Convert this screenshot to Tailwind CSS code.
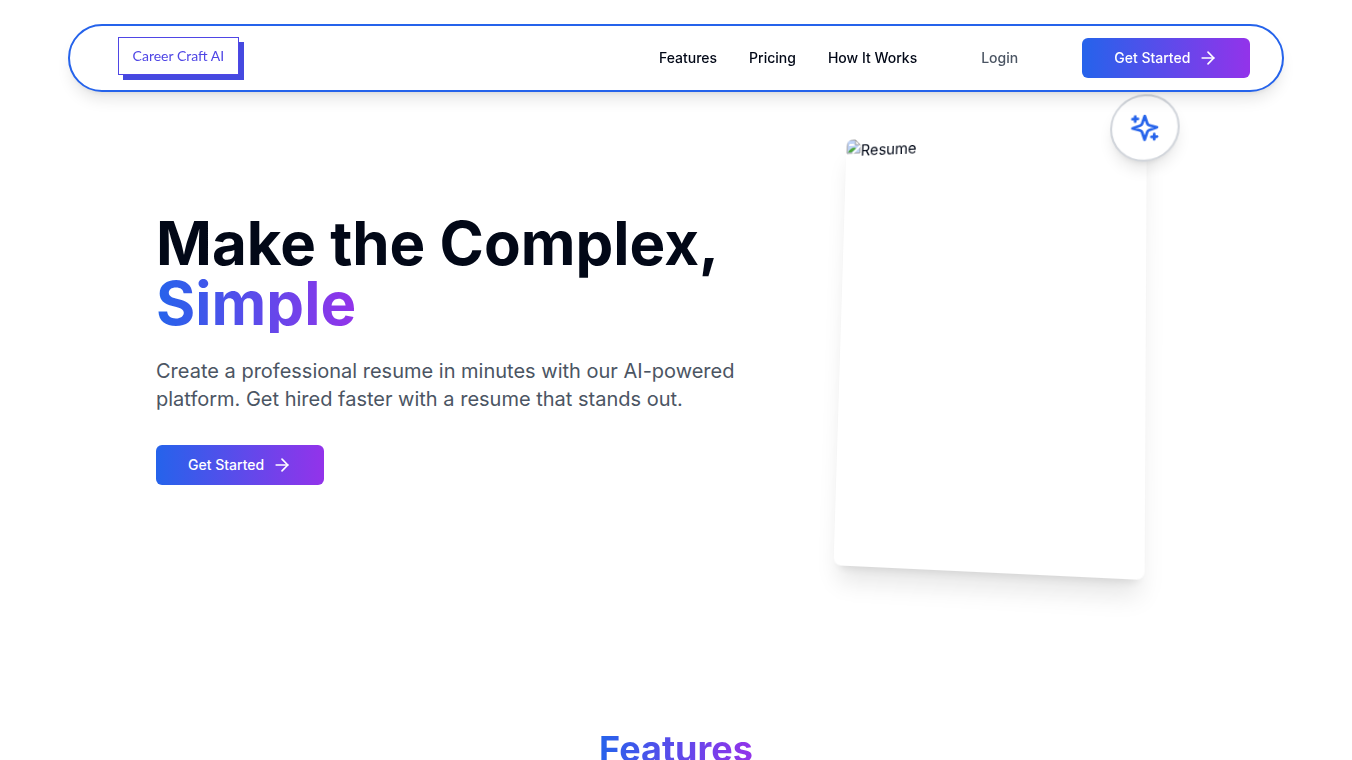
<!DOCTYPE html>
<html lang="en">
<head>
    <meta charset="UTF-8">
    <meta name="viewport" content="width=device-width, initial-scale=1.0">
    <title>Career Craft AI</title>
    <script src="https://cdn.jsdelivr.net/npm/@tailwindcss/browser@4"></script>
</head>

<body class="bg-white text-[#020817] font-['Inter',sans-serif]">
    <!-- Navbar -->
    <header class="fixed inset-x-0 top-6 z-20 mx-auto flex h-17 w-9/10 items-center justify-between rounded-full border-2 border-[#2563eb] bg-white px-8 shadow-lg">
        <a href="#" class="ml-4 mb-1 border border-[#4f46e5] bg-white px-3.5 py-2 font-['Lato',sans-serif] text-sm leading-5 whitespace-nowrap text-[#4f46e5] shadow-[5px_5px_0_#4549e0]">Career Craft AI</a>
        <div class="flex items-center gap-8">
            <nav class="flex items-center gap-8 text-sm font-medium">
                <a href="#features">Features</a>
                <a href="#pricing">Pricing</a>
                <a href="#how-it-works">How It Works</a>
            </nav>
            <a href="#login" class="px-8 text-sm font-medium text-[#4b5563]">Login</a>
            <button type="button" class="flex h-10 items-center gap-2 rounded-md bg-linear-to-r/srgb from-[#2563eb] to-[#9333ea] px-8 text-sm font-medium text-white">
                Get Started
                <svg class="size-5" viewBox="0 0 24 24" fill="none" stroke="currentColor" stroke-width="2" stroke-linecap="round" stroke-linejoin="round" aria-hidden="true">
                    <path d="M5 12h14" />
                    <path d="m12 5 7 7-7 7" />
                </svg>
            </button>
        </div>
    </header>

    <main>
        <!-- Hero -->
        <section class="mx-auto flex max-w-[1040px] items-center pt-32 pb-20">
            <div class="w-3/5">
                <h1 class="text-6xl leading-[60px] font-bold">
                    <span class="block whitespace-nowrap">Make the Complex,</span>
                    <span class="inline-block bg-linear-to-r/srgb from-[#2563eb] to-[#9333ea] bg-clip-text text-transparent">Simple</span>
                </h1>
                <p class="mt-6 text-xl leading-7 text-[#4b5563]">Create a professional resume in minutes with our AI-powered platform. Get hired faster with a resume that stands out.</p>
                <button type="button" class="mt-8 flex h-10 items-center gap-2 rounded-md bg-linear-to-r/srgb from-[#2563eb] to-[#9333ea] px-8 text-sm font-medium text-white">
                    Get Started
                    <svg class="size-5" viewBox="0 0 24 24" fill="none" stroke="currentColor" stroke-width="2" stroke-linecap="round" stroke-linejoin="round" aria-hidden="true">
                        <path d="M5 12h14" />
                        <path d="m12 5 7 7-7 7" />
                    </svg>
                </button>
            </div>
            <div class="flex w-2/5 justify-center">
                <div class="relative aspect-[312/441] w-3/4 [transform:perspective(1000px)_rotateY(-12deg)_rotateX(5deg)]">
                    <div class="flex h-full items-start overflow-hidden rounded-lg bg-white shadow-xl">
                        <svg class="size-4 shrink-0" viewBox="0 0 16 16" aria-hidden="true">
                            <path d="M1 1h9l5 5v9H1z" fill="#bfd3f7" stroke="#9a9a9a" />
                            <path d="M10 1v5h5z" fill="#fff" stroke="#9a9a9a" />
                            <path d="M3 7a2 2 0 0 1 3-2 2 2 0 0 1 3 2z" fill="#fff" />
                            <path d="M2 14c1-3 4-5 7-5l2 1-5 4z" fill="#4fa83d" />
                            <path d="M15.500 7 7 15.500" stroke="#fff" stroke-width="2" />
                        </svg>
                        <span class="text-base leading-6">Resume</span>
                    </div>
                    <div class="absolute -top-8 -right-8 rounded-full border-2 border-[#d1d5db] bg-white p-4 shadow-lg">
                        <svg class="size-8 text-[#2563eb]" viewBox="0 0 24 24" fill="none" stroke="currentColor" stroke-width="2" stroke-linecap="round" stroke-linejoin="round" aria-hidden="true">
                            <path d="m12 3-1.912 5.813a2 2 0 0 1-1.275 1.275L3 12l5.813 1.912a2 2 0 0 1 1.275 1.275L12 21l1.912-5.813a2 2 0 0 1 1.275-1.275L21 12l-5.813-1.912a2 2 0 0 1-1.275-1.275L12 3Z" />
                            <path d="M5 3v4" />
                            <path d="M19 17v4" />
                            <path d="M3 5h4" />
                            <path d="M17 19h4" />
                        </svg>
                    </div>
                </div>
            </div>
        </section>

        <!-- Features -->
        <section id="features" class="flex justify-center py-20">
            <h2 class="bg-linear-to-r/srgb from-[#2563eb] to-[#9333ea] bg-clip-text text-4xl leading-10 font-bold text-transparent">Features</h2>
        </section>
    </main>
</body>
</html>
